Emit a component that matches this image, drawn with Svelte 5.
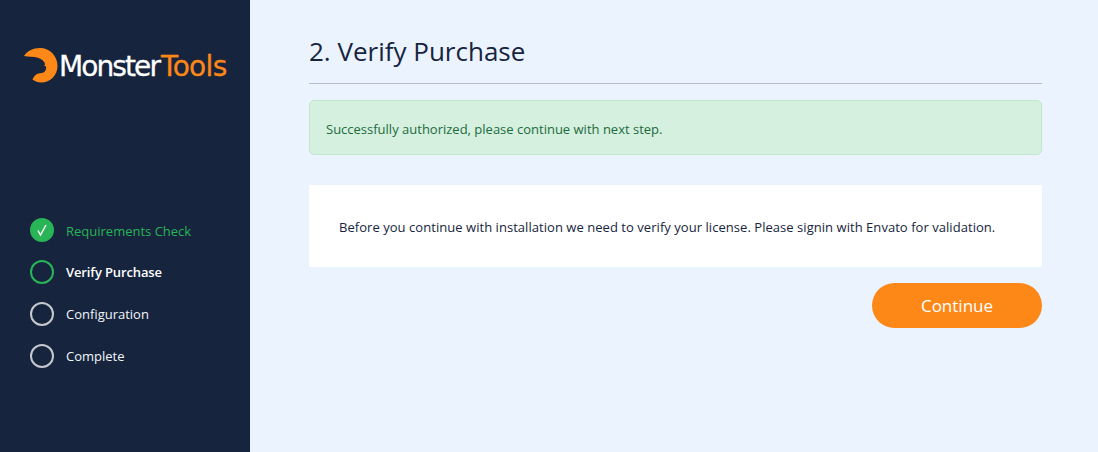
<script>
  const steps = [
    { label: 'Requirements Check', state: 'done' },
    { label: 'Verify Purchase', state: 'active' },
    { label: 'Configuration', state: 'todo' },
    { label: 'Complete', state: 'todo' }
  ];
</script>

<div class="page">
  <aside class="sidebar">
    <div class="logo">
      <svg class="mark" viewBox="0 0 36 36" width="36" height="36" aria-hidden="true">
        <path fill="#fd8717" d="M0 8C3 3 9 0 16 0C26 0 33.500 8 33.500 18C33.500 27 26.500 34.500 17 34.500C14 34.500 11 33.500 8.500 31.500C9.500 29 11 27 13 26C15 25 17 25.500 19.500 24.500C21.500 23.500 22.500 21 22 18.500L20 17.500L21.200 16.500C20.500 13.500 18 11 14 9.800C9.500 8.500 4.500 9 0 8Z"/>
      </svg>
      <span class="logo-text"><span class="w">Monster</span><span class="o">Tools</span></span>
    </div>
    <ul class="steps">
      {#each steps as step}
        <li class="step {step.state}">
          <span class="dot">
            {#if step.state === 'done'}
              <svg viewBox="0 0 24 24" width="24" height="24" aria-hidden="true">
                <path d="M8 12.500L10.500 17L16 7" fill="none" stroke="#fff" stroke-width="1.500"/>
              </svg>
            {/if}
          </span>
          <span class="label">{step.label}</span>
        </li>
      {/each}
    </ul>
  </aside>
  <main class="main">
    <h1>2. Verify Purchase</h1>
    <hr />
    <div class="alert">Successfully authorized, please continue with next step.</div>
    <div class="card">Before you continue with installation we need to verify your license. Please signin with Envato for validation.</div>
    <div class="actions">
      <button type="button" class="continue">Continue</button>
    </div>
  </main>
</div>

<style>
  :global(body) {
    margin: 0;
    background: #ebf3ff;
  }
  .page {
    display: flex;
    height: 452px;
    overflow: hidden;
    font-family: "Open Sans", "Noto Sans", sans-serif;
  }
  .sidebar {
    flex: 0 0 250px;
    background: #16253d;
    display: flex;
    flex-direction: column;
    box-sizing: border-box;
    padding: 48px 0 0 24px;
  }
  .logo {
    display: flex;
    align-items: center;
    height: 36px;
  }
  .mark { flex: none; }
  .logo-text {
    font-family: "DejaVu Sans", sans-serif;
    font-size: 28px;
    line-height: 36px;
    padding-top: 2px;
    margin-left: -1px;
    white-space: nowrap;
    -webkit-text-stroke: 0.3px currentColor;
  }
  .w { color: #fff; letter-spacing: -1.9px; }
  .o { color: #fd8717; letter-spacing: -0.7px; margin-left: 2px; }
  .steps {
    list-style: none;
    margin: 0;
    padding: 0;
    margin-top: 134px;
    margin-left: 6px;
    display: flex;
    flex-direction: column;
    gap: 18px;
  }
  .step {
    display: flex;
    align-items: center;
    gap: 12px;
    height: 24px;
    font-size: 13px;
    color: #f2f5fa;
  }
  .dot {
    flex: none;
    width: 24px;
    height: 24px;
    box-sizing: border-box;
    border-radius: 50%;
    border: 2px solid #c5c8ce;
    position: relative;
  }
  .dot svg {
    position: absolute;
    left: -2px;
    top: -2px;
  }
  .done .dot {
    border-color: #28b457;
    background: #28b457;
  }
  .done .label { color: #28b457; padding-top: 2px; }
  .active .dot { border-color: #28b457; }
  .active .label { color: #fff; font-weight: 600; letter-spacing: -0.13px; }
  .main {
    flex: 1;
    box-sizing: border-box;
    padding: 0 56px 0 59px;
    min-width: 0;
  }
  h1 {
    margin: 0;
    padding-top: 32px;
    height: 51px;
    line-height: 38px;
    font-size: 26px;
    font-weight: 400;
    color: #16253d;
  }
  hr {
    margin: 0;
    border: 0;
    height: 1px;
    background: #b9bdcb;
  }
  .alert {
    margin-top: 16px;
    height: 55px;
    box-sizing: border-box;
    display: flex;
    align-items: center;
    padding: 2px 0 0 16px;
    background: #d5f0df;
    border: 1px solid #bfe8cd;
    border-radius: 5px;
    color: #1c6b3d;
    font-size: 13px;
  }
  .card {
    margin-top: 30px;
    height: 82px;
    box-sizing: border-box;
    display: flex;
    align-items: center;
    padding: 2px 0 0 30px;
    background: #fff;
    color: #16253d;
    font-size: 13px;
    letter-spacing: 0.045px;
    white-space: nowrap;
  }
  .actions {
    display: flex;
    justify-content: flex-end;
    margin-top: 16px;
  }
  .continue {
    width: 170px;
    height: 45px;
    border: 0;
    border-radius: 23px;
    background: #fd8717;
    color: #fff;
    font-family: inherit;
    font-size: 17px;
  }
</style>
